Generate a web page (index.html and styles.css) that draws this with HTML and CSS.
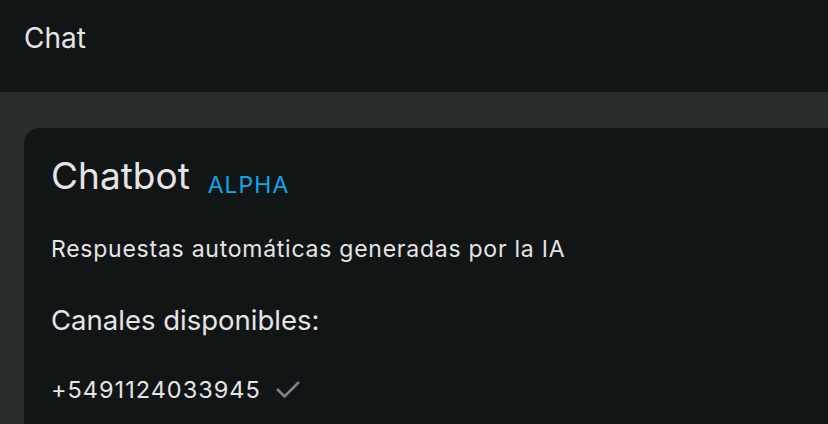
FILE: index.html
```html
<!DOCTYPE html>
<html lang="es">
<head>
<meta charset="utf-8">
<link rel="stylesheet" href="styles.css">
</head>
<body>
<header class="topbar"><span class="title">Chat</span></header>
<main class="content">
  <section class="card">
    <div class="card-head">
      <h1 class="card-title">Chatbot</h1>
      <span class="badge">ALPHA</span>
    </div>
    <p class="desc">Respuestas automáticas generadas por la IA</p>
    <h2 class="sub">Canales disponibles:</h2>
    <div class="channel">
      <span class="phone">+5491124033945</span>
      <svg class="check" width="26" height="20" viewBox="0 0 26 20"><polyline points="2,9 9.5,16.5 24,2" fill="none" stroke="#78858d" stroke-width="2.6" stroke-linecap="butt" stroke-linejoin="miter"/></svg>
    </div>
  </section>
</main>
</body>
</html>
```
FILE: styles.css
```css
* { box-sizing: border-box; }
html, body { margin: 0; padding: 0; }
body {
  background: #282c2d;
  font-family: Inter, "Noto Sans", sans-serif;
  color: #e6e4e7;
  width: 828px;
  height: 424px;
  overflow: hidden;
}
.topbar {
  height: 92px;
  background: #121516;
  display: flex;
  align-items: flex-start;
  padding: 20px 0 0 24px;
}
.title {
  font-size: 28px;
  line-height: 36px;
}
.content {
  padding: 36px 0 0 24px;
}
.card {
  background: #121516;
  border-radius: 16px 0 0 0;
  padding: 24px 28px 0 27px;
  width: 804px;
  height: 296px;
  overflow: hidden;
}
.card-head {
  display: flex;
  align-items: baseline;
  gap: 18px;
}
.card-title {
  margin: 0;
  font-size: 37px;
  font-weight: 400;
  line-height: 48px;
}
.badge {
  font-size: 23px;
  letter-spacing: 1px;
  color: #0ea5e9;
  position: relative;
  top: 4px;
}
.desc {
  margin: 34px 0 0;
  font-size: 23px;
  letter-spacing: 0.75px;
  line-height: 30px;
}
.sub {
  margin: 38px 0 0;
  font-size: 27.5px;
  font-weight: 400;
  line-height: 36px;
}
.channel {
  margin-top: 37px;
  display: flex;
  align-items: center;
  gap: 14px;
}
.phone {
  font-size: 23.5px;
  letter-spacing: 1px;
  line-height: 30px;
}
.check { display: block; }
```
